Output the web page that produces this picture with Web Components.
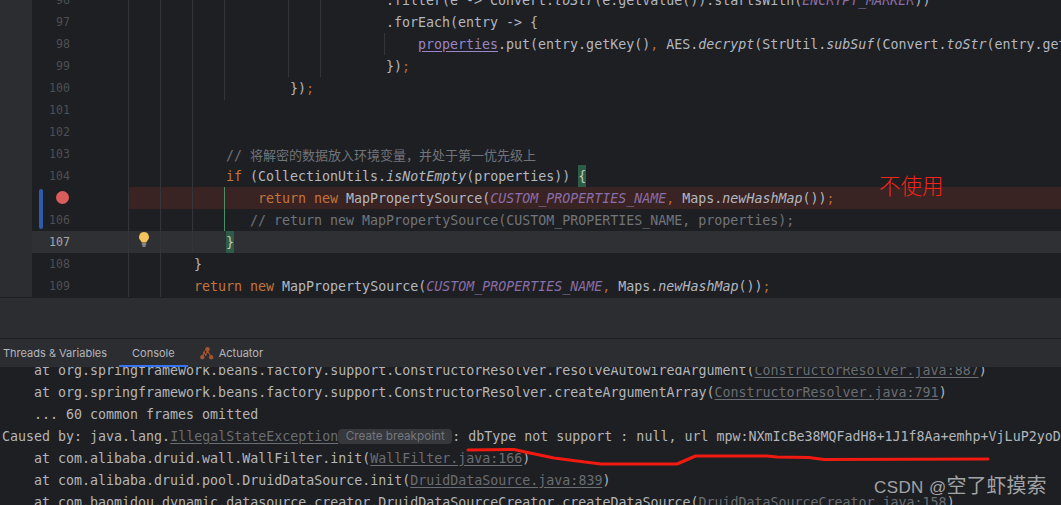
<!DOCTYPE html>
<html lang="zh">
<head>
<meta charset="utf-8">
<title>Debugger</title>
<style>
  html, body { margin: 0; padding: 0; height: 100%; background: #1e1f22; overflow: hidden; }
  body { font-family: "DejaVu Sans Mono", "Noto Sans CJK SC", monospace; }
</style>
</head>
<body>
<ide-window>
  <editor-pane>
    <code-line num="96" indent="32"><span>.filter(e -&gt; Convert.</span><i>toStr</i><span>(e.getValue()).startsWith(</span><i class="const">ENCRYPT_MARKER</i><span>))</span></code-line>
    <code-line num="97" indent="32"><span>.forEach(entry -&gt; {</span></code-line>
    <code-line num="98" indent="36"><u class="field">properties</u><span>.put(entry.getKey()</span><b class="semi">,</b><span> AES.</span><i>decrypt</i><span>(StrUtil.</span><i>subSuf</i><span>(Convert.</span><i>toStr</i><span>(entry.getValue()))));</span></code-line>
    <code-line num="99" indent="32"><span>})</span><b class="semi">;</b></code-line>
    <code-line num="100" indent="20"><span>})</span><b class="semi">;</b></code-line>
    <code-line num="101"></code-line>
    <code-line num="102"></code-line>
    <code-line num="103" indent="12"><span class="comment">// </span><span class="cjk">将解密的数据放入环境变量，并处于第一优先级上</span></code-line>
    <code-line num="104" indent="12"><b class="kw">if</b><span> (CollectionUtils.</span><i>isNotEmpty</i><span>(properties)) </span><b class="match">{</b></code-line>
    <code-line num="105" indent="16" breakpoint change="top"><b class="kw">return new</b><span> MapPropertySource(</span><i class="const">CUSTOM_PROPERTIES_NAME</i><b class="semi">,</b><span> Maps.</span><i>newHashMap</i><span>())</span><b class="semi">;</b></code-line>
    <code-line num="106" indent="15" change="bottom"><span class="comment">// return new MapPropertySource(CUSTOM_PROPERTIES_NAME, properties);</span></code-line>
    <code-line num="107" indent="12" caret bulb><b class="match">}</b></code-line>
    <code-line num="108" indent="8"><span>}</span></code-line>
    <code-line num="109" indent="8"><b class="kw">return new</b><span> MapPropertySource(</span><i class="const">CUSTOM_PROPERTIES_NAME</i><b class="semi">,</b><span> Maps.</span><i>newHashMap</i><span>())</span><b class="semi">;</b></code-line>
  </editor-pane>
  <tool-tabs>
    <tool-tab>Threads &amp; Variables</tool-tab>
    <tool-tab active>Console</tool-tab>
    <tool-tab icon="actuator">Actuator</tool-tab>
  </tool-tabs>
  <console-pane>
    <console-line indent="4"><span>at org.springframework.beans.factory.support.ConstructorResolver.resolveAutowiredArgument(</span><u>ConstructorResolver.java:887</u><span>)</span></console-line>
    <console-line indent="4"><span>at org.springframework.beans.factory.support.ConstructorResolver.createArgumentArray(</span><u>ConstructorResolver.java:791</u><span>)</span></console-line>
    <console-line indent="4"><span>... 60 common frames omitted</span></console-line>
    <console-line><span>Caused by: java.lang.</span><u>IllegalStateException</u><em>Create breakpoint</em><span>: dbType not support : null, url mpw:NXmIcBe38MQFadH8+1J1f8Aa+emhp+VjLuP2yoDq</span></console-line>
    <console-line indent="4"><span>at com.alibaba.druid.wall.WallFilter.init(</span><u>WallFilter.java:166</u><span>)</span></console-line>
    <console-line indent="4"><span>at com.alibaba.druid.pool.DruidDataSource.init(</span><u>DruidDataSource.java:839</u><span>)</span></console-line>
    <console-line indent="4"><span>at com.baomidou.dynamic.datasource.creator.DruidDataSourceCreator.createDataSource(</span><u>DruidDataSourceCreator.java:158</u><span>)</span></console-line>
  </console-pane>
  <ink-notes></ink-notes>
</ide-window>

<script>
const monoFont = `"DejaVu Sans Mono", "Noto Sans CJK SC", monospace`;

class IdeWindow extends HTMLElement {
  constructor() {
    super();
    this.attachShadow({mode: "open"}).innerHTML = `
      <style>
        :host {
          display: flex;
          flex-direction: column;
          position: relative;
          width: 1061px;
          height: 505px;
          overflow: hidden;
          background: #1e1f22;
        }
      </style>
      <slot></slot>
    `;
  }
}

// Indent guides: [x, top, height, colour]
const GUIDES = [
  [128, 0, 297], [160, 0, 297], [192, 0, 253], [224, 0, 100],
  [224, 187, 44, "#4b8f66"], [288, 0, 77], [320, 0, 77], [384, 33, 22]
];

class EditorPane extends HTMLElement {
  constructor() {
    super();
    const guides = GUIDES.map(([x, top, h, color]) =>
      `<div class="guide" style="left:${x}px;top:${top}px;height:${h}px;${color ? "background:" + color : ""}"></div>`
    ).join("");
    this.attachShadow({mode: "open"}).innerHTML = `
      <style>
        :host {
          display: block;
          position: relative;
          flex: 0 0 298px;
          overflow: hidden;
          background: #1e1f22;
        }
        #lines { margin-top: -11px; }
        .guide {
          position: absolute;
          width: 1px;
          background: #33353a;
          z-index: 1;
        }
      </style>
      <div id="lines"><slot></slot></div>
      ${guides}
    `;
  }
}

class CodeLine extends HTMLElement {
  constructor() {
    super();
    const indent = Number(this.getAttribute("indent") || 0);
    const num = this.hasAttribute("breakpoint") ? "" : this.getAttribute("num");
    this.attachShadow({mode: "open"}).innerHTML = `
      <style>
        :host {
          display: flex;
          position: relative;
          height: 22px;
          line-height: 22px;
          font-family: ${monoFont};
          font-size: 13.3px;
          color: #b2b8c1;
        }
        :host([caret]) { background: #2e3033; }
        #rail { flex: 0 0 32px; background: #2b2d30; }
        #gutter { flex: 0 0 96px; display: flex; align-items: center; }
        #bar { flex: 0 0 4px; margin-left: 7px; height: 22px; box-sizing: border-box; }
        :host([change]) #bar { background: #2f5bab; }
        :host([change="top"]) #bar { margin-top: 2px; height: 20px; border-radius: 2px 2px 0 0; }
        :host([change="bottom"]) #bar { margin-bottom: 2px; height: 20px; border-radius: 0 0 2px 2px; }
        #num {
          flex: 0 0 27px;
          text-align: right;
          font-size: 11.6px;
          color: #4c4f55;
        }
        :host([caret]) #num { color: #a3a7af; }
        #dot {
          display: none;
          position: absolute;
          left: 56px;
          top: 4px;
          width: 13px;
          height: 13px;
          border-radius: 50%;
          background: #db5c5c;
        }
        :host([breakpoint]) #dot { display: block; }
        #code {
          flex: 1;
          min-width: 0;
          overflow: hidden;
          white-space: pre;
          line-height: 24px;
          padding-left: ${2 + indent * 8}px;
        }
        :host([breakpoint]) #code { background: #3a2323; }
        #bulb { display: none; position: absolute; left: 137px; top: 0; }
        :host([bulb]) #bulb { display: block; }
        ::slotted(i) { font-style: italic; }
        ::slotted(b) { font-weight: normal; }
        ::slotted(.kw) { color: #c4743c; }
        ::slotted(.semi) { color: #b8692c; }
        ::slotted(.const) { color: #8a6ea8; }
        ::slotted(.field) {
          color: #9a86c8;
          text-decoration: underline;
          text-underline-offset: 2px;
        }
        ::slotted(.comment), ::slotted(.cjk) { color: #70747b; }
        ::slotted(.cjk) { font-size: 13px; font-family: "Noto Sans CJK SC", sans-serif; }
        ::slotted(.match) {
          display: inline-block;
          height: 22px;
          vertical-align: top;
          background: #2e5c49;
          color: #b9cdbf;
        }
      </style>
      <div id="rail"></div>
      <div id="gutter">
        <div id="bar"></div>
        <div id="num">${num}</div>
      </div>
      <div id="dot"></div>
      <div id="code"><slot></slot></div>
      <svg id="bulb" width="14" height="18" viewBox="0 0 14 18">
        <path d="M7 1a5 5 0 0 1 3.3 8.7c-.6.6-.9 1.200-1 1.800H4.700c-.1-.6-.4-1.200-1-1.800A5 5 0 0 1 7 1z" fill="#f2c55c"/>
        <path d="M4.800 13h4.400M5.500 15h3" stroke="#d8d9dc" stroke-width="1"/>
      </svg>
    `;
  }
}

class ToolTabs extends HTMLElement {
  constructor() {
    super();
    this.attachShadow({mode: "open"}).innerHTML = `
      <style>
        :host {
          display: flex;
          align-items: stretch;
          box-sizing: border-box;
          flex: 0 0 69px;
          padding-top: 40px;
          background: #2b2d30;
          position: relative;
          z-index: 1;
        }
        #bar { display: flex; flex: 1; border-top: 1px solid #1e1f22; padding-left: 3px; }
      </style>
      <div id="bar"><slot></slot></div>
    `;
  }
}

class ToolTab extends HTMLElement {
  constructor() {
    super();
    const icon = this.getAttribute("icon") === "actuator" ? `
      <svg width="14" height="15" viewBox="0 0 15 15">
        <path d="M2.500 11.500 4.500 5.500 6 10M8 4.500 6 10M8 4.500 12 11.500" fill="none" stroke="#a65430" stroke-width="1.200"/>
        <circle cx="8" cy="3" r="2.500" fill="#a65430"/>
        <circle cx="2.500" cy="11.500" r="2.300" fill="#a65430"/>
        <circle cx="12" cy="11.500" r="2.300" fill="#a65430"/>
      </svg>` : "";
    this.attachShadow({mode: "open"}).innerHTML = `
      <style>
        :host {
          display: flex;
          align-items: center;
          gap: 5px;
          box-sizing: border-box;
          height: 28px;
          padding: 0 12px 0 0;
          font-family: Inter, "Liberation Sans", sans-serif;
          font-size: 11px;
          color: #b4b7bd;
          white-space: nowrap;
        }
        :host([active]) {
          padding: 0 13px;
          box-shadow: inset 0 -2px 0 #3574f0;
        }
        :host([icon]) { padding: 0 12px; }
      </style>
      ${icon}<slot></slot>
    `;
  }
}

class ConsolePane extends HTMLElement {
  constructor() {
    super();
    this.attachShadow({mode: "open"}).innerHTML = `
      <style>
        :host { display: block; flex: 1; min-height: 0; overflow: hidden; background: #1e1f22; }
        #lines { margin-top: -8px; }
      </style>
      <div id="lines"><slot></slot></div>
    `;
  }
}

class ConsoleLine extends HTMLElement {
  constructor() {
    super();
    const indent = Number(this.getAttribute("indent") || 0);
    this.attachShadow({mode: "open"}).innerHTML = `
      <style>
        :host {
          display: block;
          height: 22px;
          overflow: hidden;
          font-family: ${monoFont};
          font-size: 13.3px;
          color: #b3b6bc;
        }
        #text {
          line-height: 24px;
          padding-left: ${2 + indent * 8}px;
          white-space: pre;
        }
        ::slotted(u) { color: #696d74; text-underline-offset: 2px; }
        ::slotted(em) {
          display: inline-block;
          box-sizing: border-box;
          width: 114px;
          height: 15px;
          border-radius: 4px;
          background: #36383c;
          color: #74777e;
          font: 11.7px/15px Inter, "Liberation Sans", sans-serif;
          text-align: center;
          vertical-align: 1px;
        }
      </style>
      <div id="text"><slot></slot></div>
    `;
  }
}

// Hand drawn marks on top of the screenshot
class InkNotes extends HTMLElement {
  constructor() {
    super();
    this.attachShadow({mode: "open"}).innerHTML = `
      <style>
        :host { position: absolute; inset: 0; z-index: 3; pointer-events: none; }
        svg { position: absolute; left: 0; top: 0; }
        #note {
          position: absolute;
          left: 879px;
          top: 170px;
          font: 300 21.5px/30px "Noto Sans CJK SC", sans-serif;
          color: #f5231a;
        }
        #mark {
          position: absolute;
          left: 874px;
          top: 470px;
          font: 17px/30px "Liberation Sans", sans-serif;
          letter-spacing: .4px;
          color: #a3a4a6;
          white-space: nowrap;
        }
        #mark span { font: 20px/30px "Noto Sans CJK SC", sans-serif; letter-spacing: 0; }
      </style>
      <svg width="1061" height="505">
        <path d="M468 450 514 449.500 530 453 554 458 577 461 601 464 677 464 695.500 456 767 456 777 457 809 457.500 824 459.500 988 459" fill="none" stroke="#f01a10" stroke-width="3" stroke-linejoin="round" stroke-linecap="round"/>
      </svg>
      <div id="note">不使用</div>
      <div id="mark">CSDN @<span>空了虾摸索</span></div>
    `;
  }
}

customElements.define("ide-window", IdeWindow);
customElements.define("editor-pane", EditorPane);
customElements.define("code-line", CodeLine);
customElements.define("tool-tabs", ToolTabs);
customElements.define("tool-tab", ToolTab);
customElements.define("console-pane", ConsolePane);
customElements.define("console-line", ConsoleLine);
customElements.define("ink-notes", InkNotes);
</script>
</body>
</html>
